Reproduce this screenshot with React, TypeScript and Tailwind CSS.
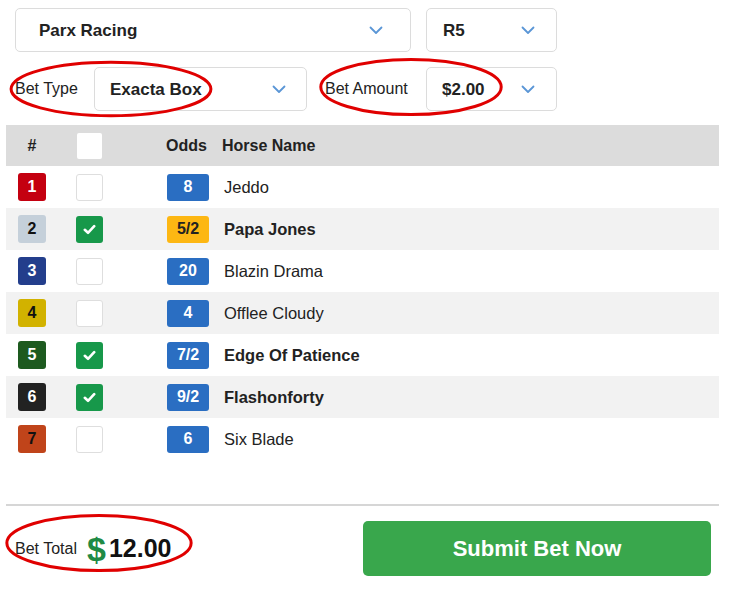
import React from 'react';

const HORSES = [
  { num: '1', bg: 'bg-[#c40010]', fg: 'text-white', odds: '8', oddsBg: 'bg-[#2a6ec2]', oddsFg: 'text-white', name: 'Jeddo', checked: false },
  { num: '2', bg: 'bg-[#c5d0da]', fg: 'text-[#111]', odds: '5/2', oddsBg: 'bg-[#fdb713]', oddsFg: 'text-[#222]', name: 'Papa Jones', checked: true },
  { num: '3', bg: 'bg-[#233e8c]', fg: 'text-white', odds: '20', oddsBg: 'bg-[#2a6ec2]', oddsFg: 'text-white', name: 'Blazin Drama', checked: false },
  { num: '4', bg: 'bg-[#d2b200]', fg: 'text-[#111]', odds: '4', oddsBg: 'bg-[#2a6ec2]', oddsFg: 'text-white', name: 'Offlee Cloudy', checked: false },
  { num: '5', bg: 'bg-[#1d5a1f]', fg: 'text-white', odds: '7/2', oddsBg: 'bg-[#2a6ec2]', oddsFg: 'text-white', name: 'Edge Of Patience', checked: true },
  { num: '6', bg: 'bg-[#222222]', fg: 'text-white', odds: '9/2', oddsBg: 'bg-[#2a6ec2]', oddsFg: 'text-white', name: 'Flashonforty', checked: true },
  { num: '7', bg: 'bg-[#c0441a]', fg: 'text-[#111]', odds: '6', oddsBg: 'bg-[#2a6ec2]', oddsFg: 'text-white', name: 'Six Blade', checked: false },
];

function Chevron() {
  return (
    <svg width="14" height="9" viewBox="0 0 14 9" fill="none">
      <polyline points="1.5,1.5 7,7 12.5,1.5" stroke="#5a96d6" strokeWidth="1.8" strokeLinecap="round" strokeLinejoin="round" />
    </svg>
  );
}

function Select({ value, className, textPad, chevronPad }: { value: string; className: string; textPad: string; chevronPad: string }) {
  return (
    <div className={`h-[44px] border border-[#dcdcdc] rounded-[5px] bg-white flex items-center justify-between ${textPad} ${chevronPad} ${className}`}>
      <span className="text-[17px] font-bold text-[#222] pt-[2px]">{value}</span>
      <Chevron />
    </div>
  );
}

function Check() {
  return (
    <svg width="13" height="11" viewBox="0 0 13 11" fill="none">
      <polyline points="1.8,5.8 5,8.8 11.2,2.2" stroke="white" strokeWidth="2.6" strokeLinecap="round" strokeLinejoin="round" />
    </svg>
  );
}

function Ellipse({ className }: { className: string }) {
  return (
    <svg className={`absolute pointer-events-none ${className}`} viewBox="0 0 100 100" preserveAspectRatio="none">
      <ellipse cx="50" cy="50" rx="48.5" ry="46" fill="none" stroke="#e00000" strokeWidth="3" vectorEffect="non-scaling-stroke" />
    </svg>
  );
}

export default function App() {
  return (
    <div className="relative w-[729px] h-[593px] bg-white font-['Liberation_Sans',Arial,sans-serif] text-[#222]">
      <div className="flex gap-[15px] pl-[15px] pt-[8px]">
        <Select value="Parx Racing" className="w-[396px]" textPad="pl-[23px]" chevronPad="pr-[27px]" />
        <Select value="R5" className="w-[131px]" textPad="pl-[16px]" chevronPad="pr-[21px]" />
      </div>

      <div className="flex items-center pl-[15px] mt-[15px]">
        <span className="w-[79px] text-[16px] text-[#222]">Bet Type</span>
        <Select value="Exacta Box" className="w-[213px]" textPad="pl-[15px]" chevronPad="pr-[20px]" />
        <span className="w-[119px] pl-[18px] text-[16px] text-[#222]">Bet Amount</span>
        <Select value="$2.00" className="w-[131px]" textPad="pl-[15px]" chevronPad="pr-[21px]" />
      </div>

      <div className="mx-[6px] mt-[14px] w-[713px]">
        <div className="h-[41px] bg-[#dcdcdc] flex items-center text-[16px] font-bold">
          <span className="w-[40px] pl-[12px] text-center">#</span>
          <span className="ml-[31px] w-[25px] h-[26px] bg-white rounded-[2px]" />
          <span className="ml-[64px] w-[42px]">Odds</span>
          <span className="ml-[14px]">Horse Name</span>
        </div>
        {HORSES.map((h, i) => (
          <div key={h.num} className={`h-[42px] flex items-center ${i % 2 === 1 ? 'bg-[#f2f2f2]' : 'bg-white'}`}>
            <span className={`ml-[12px] w-[28px] h-[28px] rounded-[3px] flex items-center justify-center text-[16px] font-bold ${h.bg} ${h.fg}`}>
              {h.num}
            </span>
            <span
              className={`ml-[30px] w-[27px] h-[27px] rounded-[3px] flex items-center justify-center ${
                h.checked ? 'bg-[#17984a]' : 'bg-white border border-[#dedede]'
              }`}
            >
              {h.checked && <Check />}
            </span>
            <span className={`ml-[64px] w-[42px] h-[27px] rounded-[3px] flex items-center justify-center text-[16px] font-bold ${h.oddsBg} ${h.oddsFg}`}>
              {h.odds}
            </span>
            <span className={`ml-[15px] text-[16.5px] text-[#222] ${h.checked ? 'font-bold' : ''}`}>{h.name}</span>
          </div>
        ))}
      </div>

      <div className="mx-[6px] mt-[44px] w-[713px] h-[2px] bg-[#d6d6d6]" />

      <div className="flex items-center justify-between mt-[15px] pl-[15px] pr-[18px]">
        <div className="flex items-center">
          <span className="text-[16px] text-[#222]">Bet Total</span>
          <span className="ml-[10px] text-[34px] leading-none font-bold text-[#1f8a45]">$</span>
          <span className="ml-[3px] text-[25px] leading-none font-bold text-[#111]">12.00</span>
        </div>
        <button className="w-[348px] h-[55px] rounded-[5px] bg-[#39a74c] text-white text-[22px] font-bold">
          Submit Bet Now
        </button>
      </div>

      <Ellipse className="left-[8px] top-[60px] w-[206px] h-[58px]" />
      <Ellipse className="left-[318px] top-[57px] w-[186px] h-[60px]" />
      <Ellipse className="left-[4px] top-[513px] w-[190px] h-[60px]" />
    </div>
  );
}
